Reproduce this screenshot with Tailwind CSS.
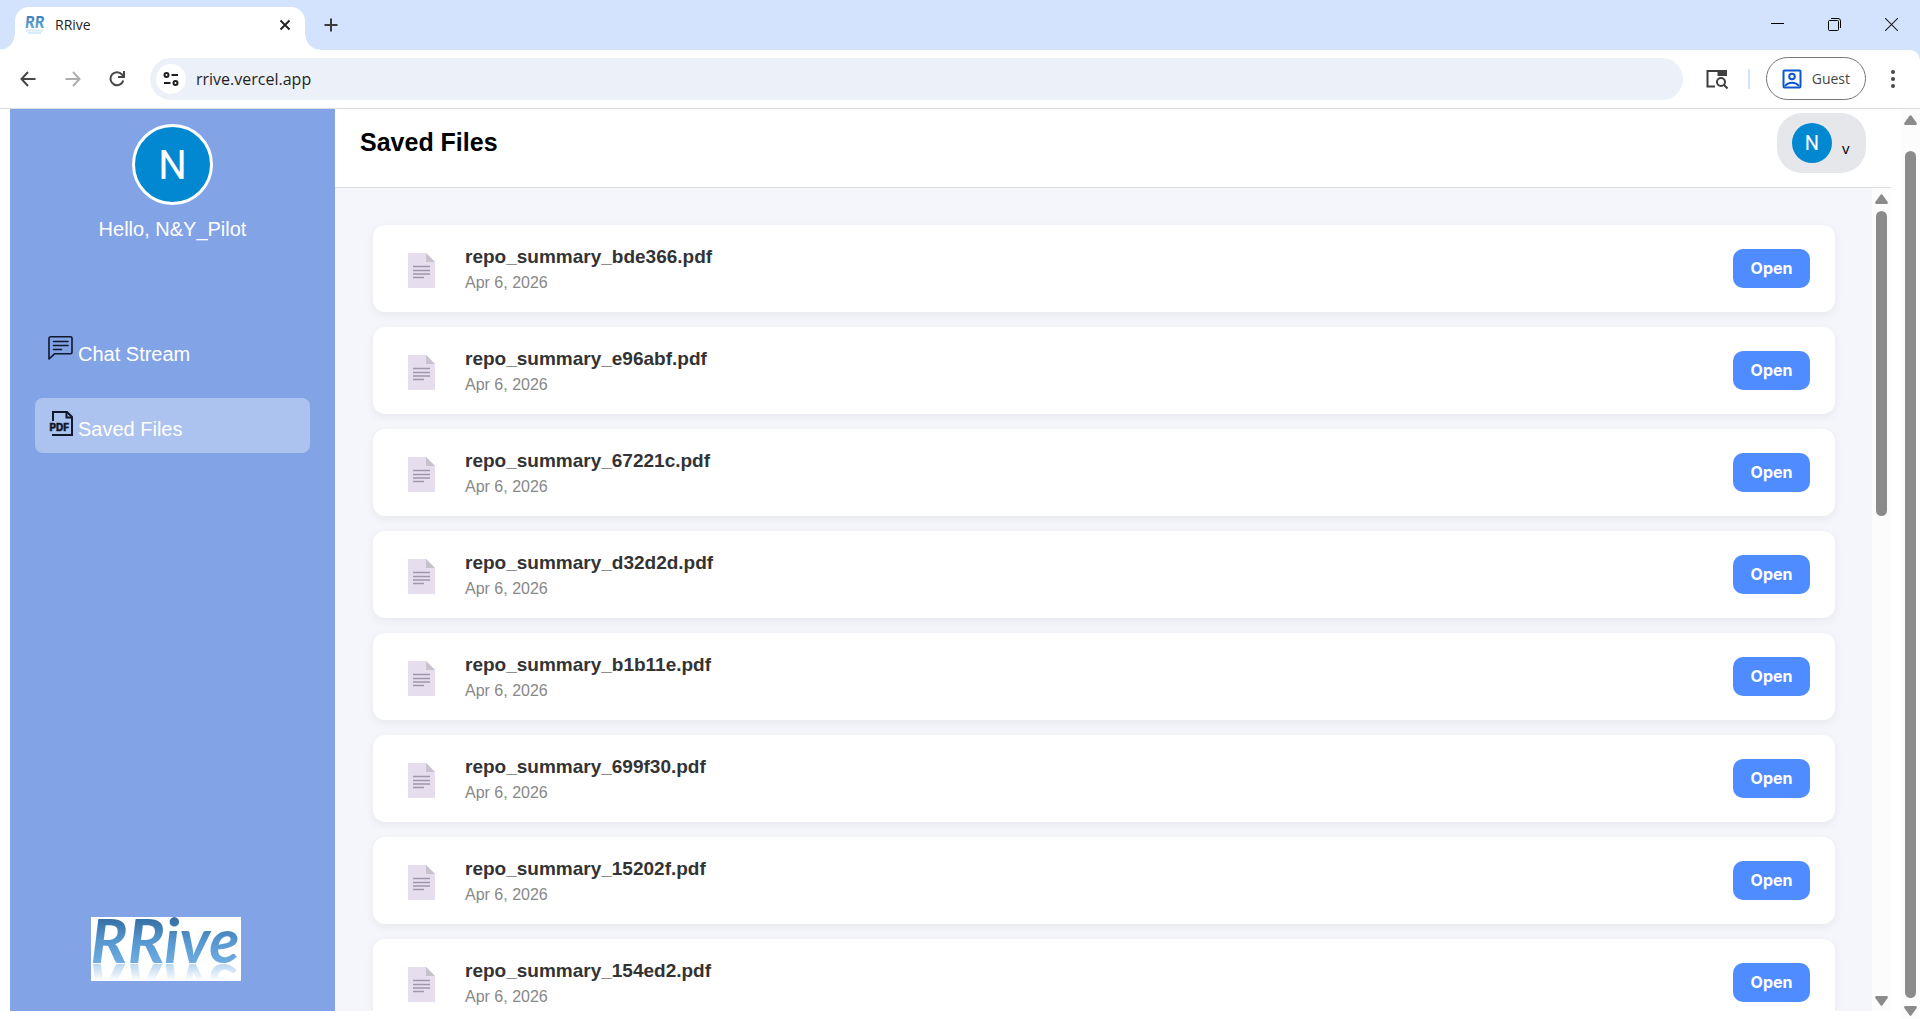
<!DOCTYPE html>
<html lang="en">

<head>
    <meta charset="UTF-8">
    <meta name="viewport" content="width=device-width, initial-scale=1.0">
    <title>RRive</title>
    <script src="https://cdn.jsdelivr.net/npm/@tailwindcss/browser@4"></script>
</head>

<body class="flex flex-col h-screen overflow-hidden bg-white font-['Liberation_Sans',Arial,sans-serif] text-black">

    <!-- tab strip -->
    <div class="flex items-end h-[50px] shrink-0 pl-[15px] bg-[#d3e3fd] font-['Open_Sans','Noto_Sans',sans-serif]">
        <div class="relative flex items-center w-[290px] h-[43px] pl-2.5 pr-3 pb-2 rounded-t-[14px] bg-white">
            <span class="absolute bottom-0 -left-[15px] size-[15px] bg-[radial-gradient(circle_at_0_0,#d3e3fd_14px,#fff_15px)]"></span>
            <span class="absolute bottom-0 -right-[15px] size-[15px] bg-[radial-gradient(circle_at_100%_0,#d3e3fd_14px,#fff_15px)]"></span>
            <svg class="size-5 overflow-visible" viewBox="0 0 20 20" aria-hidden="true">
                <defs>
                    <linearGradient id="fav" x1="0" y1="0" x2="0" y2="1">
                        <stop offset="0" stop-color="#3673a8" />
                        <stop offset="1" stop-color="#6db1e8" />
                    </linearGradient>
                </defs>
                <text x="0" y="13" font-family="Lato" font-size="16" font-weight="900" font-style="italic" fill="url(#fav)">RR</text>
                <path d="M1 15.500h17M3 18h13" stroke="#d9eaf8" stroke-width="2" />
            </svg>
            <span class="ml-2.5 text-[14px] leading-5 text-[#1f1f1f]">RRive</span>
            <button class="ml-auto flex items-center justify-center size-4" aria-label="Close tab">
                <svg class="size-3" viewBox="0 0 12 12" stroke="#1f1f1f" stroke-width="1.8">
                    <path d="M1.500 1.500l9 9M10.500 1.500l-9 9" />
                </svg>
            </button>
        </div>
        <button class="flex items-center justify-center size-5 ml-4 mb-[15px]" aria-label="New tab">
            <svg class="size-3.5" viewBox="0 0 14 14" stroke="#3c3c3c" stroke-width="2">
                <path d="M7 0.500v13M0.500 7h13" />
            </svg>
        </button>
        <div class="flex items-center gap-11 ml-auto mr-[22px] mb-[19px]">
            <button aria-label="Minimize">
                <svg class="block size-[13px]" viewBox="0 0 13 13" stroke="#000" stroke-width="1">
                    <path d="M0 5.500h13" />
                </svg>
            </button>
            <button aria-label="Restore">
                <svg class="block size-[13px]" viewBox="0 0 13 13" fill="none" stroke="#000" stroke-width="1">
                    <rect x=".5" y="2.500" width="10" height="10" rx="1" />
                    <path d="M3 .5h7q2.500 0 2.500 2.500v7" />
                </svg>
            </button>
            <button aria-label="Close">
                <svg class="block size-[13px]" viewBox="0 0 13 13" stroke="#222" stroke-width="1.100">
                    <path d="M0 0l13 13M13 0L0 13" />
                </svg>
            </button>
        </div>
    </div>

    <!-- toolbar -->
    <div class="shrink-0 bg-[#d3e3fd]">
        <div class="flex items-center h-[59px] pl-5 pr-6 pb-px rounded-tr-[10px] border-b border-[#dedede] bg-white font-['Open_Sans','Noto_Sans',sans-serif]">
            <button aria-label="Back">
                <svg class="block size-4" viewBox="0 0 16 16" fill="none" stroke="#474747" stroke-width="2">
                    <path d="M15.500 8H1.500M8 1L1.500 8 8 15" />
                </svg>
            </button>
            <button class="ml-[29px]" aria-label="Forward">
                <svg class="block size-4" viewBox="0 0 16 16" fill="none" stroke="#adadad" stroke-width="2">
                    <path d="M.5 8h14M8 1l6.500 7L8 15" />
                </svg>
            </button>
            <button class="ml-7" aria-label="Reload">
                <svg class="block size-4" viewBox="0 0 16 16" fill="none" stroke="#474747" stroke-width="2">
                    <path d="M14.300 9.500A6.500 6.500 0 1 1 13 3.500L14.500 5.500" />
                    <path d="M15 0v6H9" />
                </svg>
            </button>
            <div class="flex flex-1 items-center h-[42px] ml-[25px] pl-1.5 rounded-full bg-[#ebf0f9]">
                <button class="flex items-center justify-center size-[30px] rounded-full bg-white" aria-label="Site information">
                    <svg class="block w-4 h-3.5" viewBox="0 0 16 14" fill="none" stroke="#1f1f1f" stroke-width="2">
                        <circle cx="3.500" cy="3" r="2" />
                        <path d="M8.500 3H15M1 11h6.500" />
                        <circle cx="12.500" cy="11" r="2" />
                    </svg>
                </button>
                <input type="text" value="rrive.vercel.app" aria-label="Address" class="flex-1 ml-2.5 pt-px text-base leading-6 text-[#1f1f1f] bg-transparent outline-none">
            </div>
            <button class="ml-[23px]" aria-label="Search tabs">
                <svg class="block w-[22px] h-5" viewBox="0 0 22 20" fill="none" stroke="#3f3f3f" stroke-width="2">
                    <path d="M9 17.500H1.500V2H20v5" />
                    <path d="M11.500 1H21v6h-9.500z" fill="#3f3f3f" stroke="none" />
                    <circle cx="15" cy="13" r="4" />
                    <path d="M18 16l3.500 3.500" />
                </svg>
            </button>
            <span class="w-0.5 h-5 ml-5 bg-[#d3e3fd]"></span>
            <button class="flex items-center h-[43px] ml-4 pl-[15px] pr-[15px] border border-[#747775] rounded-full">
                <svg class="block size-5" viewBox="0 0 20 20" fill="none" stroke="#0b57d0" stroke-width="2">
                    <rect x="1.500" y="1.500" width="17" height="17" rx="1" />
                    <circle cx="10" cy="7.500" r="2.800" />
                    <path d="M3 17c3-4.500 11-4.500 14 0" />
                </svg>
                <span class="ml-2.5 text-[14px] leading-5 text-[#474747]">Guest</span>
            </button>
            <button class="ml-6" aria-label="Menu">
                <svg class="block w-1.5 h-[18px]" viewBox="0 0 6 18" fill="#474747">
                    <circle cx="3" cy="2" r="2" />
                    <circle cx="3" cy="9" r="2" />
                    <circle cx="3" cy="16" r="2" />
                </svg>
            </button>
        </div>
    </div>

    <!-- page -->
    <div class="flex flex-1 min-h-0">
        <div class="flex flex-1 min-w-0 pl-2.5 pr-2.5 pb-2">

            <aside class="flex flex-col items-center w-[325px] shrink-0 pt-[15px] pb-[30px] bg-[#82a3e6] text-xl leading-6 text-white">
                <div class="flex items-center justify-center size-[81px] pt-0.5 border-3 border-white rounded-full bg-[#0288d1] font-[Roboto,sans-serif] text-[40px]">N</div>
                <p class="mt-3">Hello, N&amp;Y_Pilot</p>
                <nav class="flex flex-col gap-5 w-full mt-[82px] px-[25px]">
                    <a href="#" class="flex h-[55px] pl-3 pt-3 rounded-lg">
                        <svg class="size-[27px]" viewBox="0 0 27 27" fill="none" stroke="#10182b" stroke-width="1.600" stroke-linejoin="round" stroke-linecap="round">
                            <path d="M2 24V3.500Q2 1.800 3.500 1.800h20q1.500 0 1.500 1.500v14q0 1.500-1.500 1.500H7.500z" />
                            <path d="M6.500 6.500h14.500M6.500 10.500h14.500M6.500 14.500h8" />
                        </svg>
                        <span class="ml-1 mt-[7px]">Chat Stream</span>
                    </a>
                    <a href="#" class="flex h-[55px] pl-3 pt-3 rounded-lg bg-white/35">
                        <svg class="size-[27px]" viewBox="0 0 27 27" fill="none" stroke="#10182b" stroke-width="2">
                            <path d="M6 11V2h14l5 5v18H5" />
                            <path d="M19.500 2v5.500H25" />
                            <text x="2.500" y="20.500" font-family="Inter" font-size="10" font-weight="800" fill="#10182b" stroke-width=".4">PDF</text>
                        </svg>
                        <span class="ml-1 mt-[7px]">Saved Files</span>
                    </a>
                </nav>
                <div class="w-[150px] h-16 mt-auto mr-3.5 bg-white">
                    <div class="h-[47px] bg-linear-to-b from-[#336c9f] via-[#5596d0] to-[#6eaee2] bg-clip-text font-[Lato,sans-serif] text-[62px] leading-11 font-bold italic text-transparent [-webkit-box-reflect:below_-1px_linear-gradient(transparent_62%,rgba(0,0,0,0.5))]">RRive</div>
                </div>
            </aside>

            <main class="flex flex-col flex-1 min-w-0">
                <header class="flex h-[79px] shrink-0 pt-1 pl-[25px] pr-[25px] border-b border-[#ddd]">
                    <h1 class="mt-[13px] text-[25px] leading-8 font-bold">Saved Files</h1>
                    <button class="flex items-center w-[89px] h-[60px] ml-auto pl-[15px] rounded-[25px] bg-[#e5e7eb]">
                        <span class="flex items-center justify-center size-10 rounded-full bg-[#0288d1] font-[Roboto,sans-serif] text-xl text-white">N</span>
                        <span class="ml-2.5 mt-2.5 font-['Open_Sans',sans-serif] text-[15px] leading-5">v</span>
                    </button>
                </header>

                <div class="flex flex-1 min-h-0">
                    <ul id="fileList" class="flex flex-col flex-1 gap-[15px] pl-[38px] pr-[37px] pt-[37px] overflow-hidden bg-[#f4f6fb]"></ul>
                    <div class="flex flex-col items-center w-[19px] pt-1.5 pb-[5px] bg-[#fcfcfc]" aria-hidden="true">
                        <svg class="w-[13px] h-2.5 shrink-0" viewBox="0 0 13 10" fill="#8b8b8b"><path d="M5.500.8q1-1.200 2 0L12.700 8q.6 1.700-.9 2H1.200Q-.3 9.700.3 8z" /></svg>
                        <div class="w-[11px] h-[305px] mt-[7px] rounded-full bg-[#8b8b8b]"></div>
                        <svg class="w-[13px] h-2.5 mt-auto shrink-0 rotate-180" viewBox="0 0 13 10" fill="#8b8b8b"><path d="M5.500.8q1-1.200 2 0L12.700 8q.6 1.700-.9 2H1.200Q-.3 9.700.3 8z" /></svg>
                    </div>
                </div>
            </main>
        </div>

        <div class="flex flex-col items-center w-[19px] pt-1.5 pb-[3px] bg-[#fcfcfc]" aria-hidden="true">
            <svg class="w-[13px] h-2.5 shrink-0" viewBox="0 0 13 10" fill="#8b8b8b"><path d="M5.500.8q1-1.200 2 0L12.700 8q.6 1.700-.9 2H1.200Q-.3 9.700.3 8z" /></svg>
            <div class="w-[11px] flex-1 mt-[26px] mb-2 rounded-full bg-[#8b8b8b]"></div>
            <svg class="w-[13px] h-2.5 shrink-0 rotate-180" viewBox="0 0 13 10" fill="#8b8b8b"><path d="M5.500.8q1-1.200 2 0L12.700 8q.6 1.700-.9 2H1.200Q-.3 9.700.3 8z" /></svg>
        </div>
    </div>

    <!-- shared page icon -->
    <svg class="hidden">
        <symbol id="fileIcon" viewBox="0 0 27 35">
            <path d="M0 0h18l9 9v26H0z" fill="#e6deef" />
            <path d="M18 0l9 9h-9z" fill="#c8c2ce" />
            <path d="M5 13.500h17M5 17.500h17M5 21h17M5 24.500h11" stroke="#a097aa" stroke-width="1.300" />
        </symbol>
    </svg>

    <script>
        const files = ['bde366', 'e96abf', '67221c', 'd32d2d', 'b1b11e', '699f30', '15202f', '154ed2'];

        document.getElementById('fileList').innerHTML = files.map(id => `
            <li class="flex items-center h-[87px] shrink-0 pl-[35px] pr-[25px] rounded-xl bg-white shadow-[0_3px_10px_rgba(0,0,0,0.06)]">
                <svg class="w-[27px] h-[35px] mt-1 shrink-0"><use href="#fileIcon" /></svg>
                <div class="ml-[30px]">
                    <div class="text-[19px] leading-6 font-bold text-[#333]">repo_summary_${id}.pdf</div>
                    <div class="mt-1 text-base leading-5 text-[#888]">Apr 6, 2026</div>
                </div>
                <button class="w-[77px] h-[39px] pb-px ml-auto rounded-[10px] bg-[#4f8cff] font-[Inter,sans-serif] text-base font-bold text-white">Open</button>
            </li>`).join('');
    </script>
</body>

</html>
